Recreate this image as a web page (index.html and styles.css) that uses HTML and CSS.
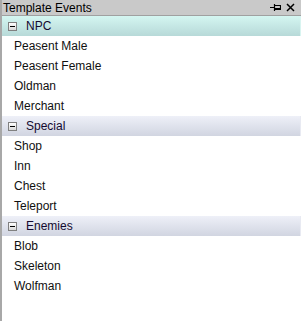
FILE: index.html
```html
<!DOCTYPE html>
<html lang="en">
<head>
  <meta charset="UTF-8">
  <title>Template Events</title>
  <link rel="stylesheet" href="styles.css">
</head>
<body>
  <div class="panel">
    <div class="titlebar">
      <span class="title">Template Events</span>
      <div class="tools">
        <svg class="pin" width="11" height="9" viewBox="0 0 11 9">
          <path d="M0 4.5h4M4.5 1v7M4.5 2.5h6v4h-6M4.5 5.5h6" stroke="#000" stroke-width="1.2" fill="none"/>
        </svg>
        <svg class="close" width="9" height="9" viewBox="0 0 9 9">
          <path d="M1 1l7 7M8 1l-7 7" stroke="#000" stroke-width="1.5" fill="none"/>
        </svg>
      </div>
    </div>
    <div class="list">
      <div class="group npc"><span class="toggle"></span>NPC</div>
      <div class="item">Peasent Male</div>
      <div class="item">Peasent Female</div>
      <div class="item">Oldman</div>
      <div class="item">Merchant</div>
      <div class="group"><span class="toggle"></span>Special</div>
      <div class="item">Shop</div>
      <div class="item">Inn</div>
      <div class="item">Chest</div>
      <div class="item">Teleport</div>
      <div class="group"><span class="toggle"></span>Enemies</div>
      <div class="item">Blob</div>
      <div class="item">Skeleton</div>
      <div class="item">Wolfman</div>
    </div>
  </div>
</body>
</html>
```

FILE: styles.css
```css
body {
  margin: 0;
  font-family: 'Liberation Sans', Arial, sans-serif;
  font-size: 12px;
  color: #101010;
  background: #fff;
}
.panel {
  display: flex;
  flex-direction: column;
  height: 100vh;
  border-left: 2px solid #a8a8a8;
  box-sizing: border-box;
}
.titlebar {
  display: flex;
  align-items: center;
  justify-content: space-between;
  height: 15px;
  background-color: #c9c9c9;
  border-bottom: 1px solid #a0a0a0;
  padding: 0 6px 0 1px;
}
.titlebar .title { color: #000; }
.tools { display: flex; align-items: center; gap: 5px; }
.list { flex: 1; }
.group {
  display: flex;
  align-items: center;
  height: 20px;
  padding-left: 6px;
  background: linear-gradient(#eef0f8, #d1d5e1);
  border-right: 1px solid #e8eaf2;
  color: #140a30;
}
.group.npc { background: linear-gradient(#d4f6f1, #b7d9d8); border-right-color: #d8f4f0; }
.toggle {
  position: relative;
  width: 7px;
  height: 7px;
  margin-right: 9px;
  border: 1px solid #808080;
  background: linear-gradient(#ffffff, #d8d8d8);
}
.toggle::after {
  content: '';
  position: absolute;
  left: 1px;
  top: 3px;
  width: 5px;
  height: 1px;
  background: #000;
}
.item {
  height: 20px;
  line-height: 21px;
  padding-left: 12px;
}
```
